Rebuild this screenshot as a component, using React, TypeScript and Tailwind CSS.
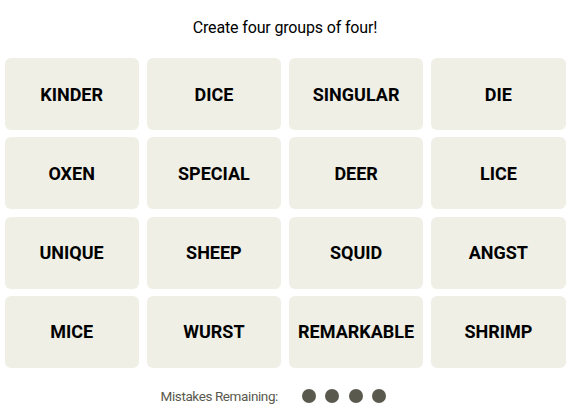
import React from 'react';

const words = [
  'KINDER', 'DICE', 'SINGULAR', 'DIE',
  'OXEN', 'SPECIAL', 'DEER', 'LICE',
  'UNIQUE', 'SHEEP', 'SQUID', 'ANGST',
  'MICE', 'WURST', 'REMARKABLE', 'SHRIMP',
];

export default function App() {
  return (
    <div className="flex flex-col items-center bg-white w-[570px] h-[408px] pt-[16px] font-['Roboto',sans-serif]">
      <p className="text-[16px] leading-[24px] tracking-[-0.15px] text-black">Create four groups of four!</p>

      {/* Word tiles */}
      <div className="mt-[18px] grid grid-cols-4 gap-x-2 gap-y-[7.3px] w-[561px]">
        {words.map((w) => (
          <button
            key={w}
            className="h-[72px] rounded-md bg-[#efefe6] flex items-center justify-center text-[18px] font-bold text-black uppercase"
          >
            {w}
          </button>
        ))}
      </div>

      {/* Mistakes */}
      <div className="mt-[17px] flex items-center h-6 pr-[23px]">
        <span className="text-[13.5px] tracking-[-0.4px] text-[#5a594e] mr-6">Mistakes Remaining:</span>
        <div className="flex gap-[9.5px]">
          {[0, 1, 2, 3].map((i) => (
            <span key={i} className="w-[14px] h-[14px] rounded-full bg-[#5a594e]" />
          ))}
        </div>
      </div>
    </div>
  );
}
